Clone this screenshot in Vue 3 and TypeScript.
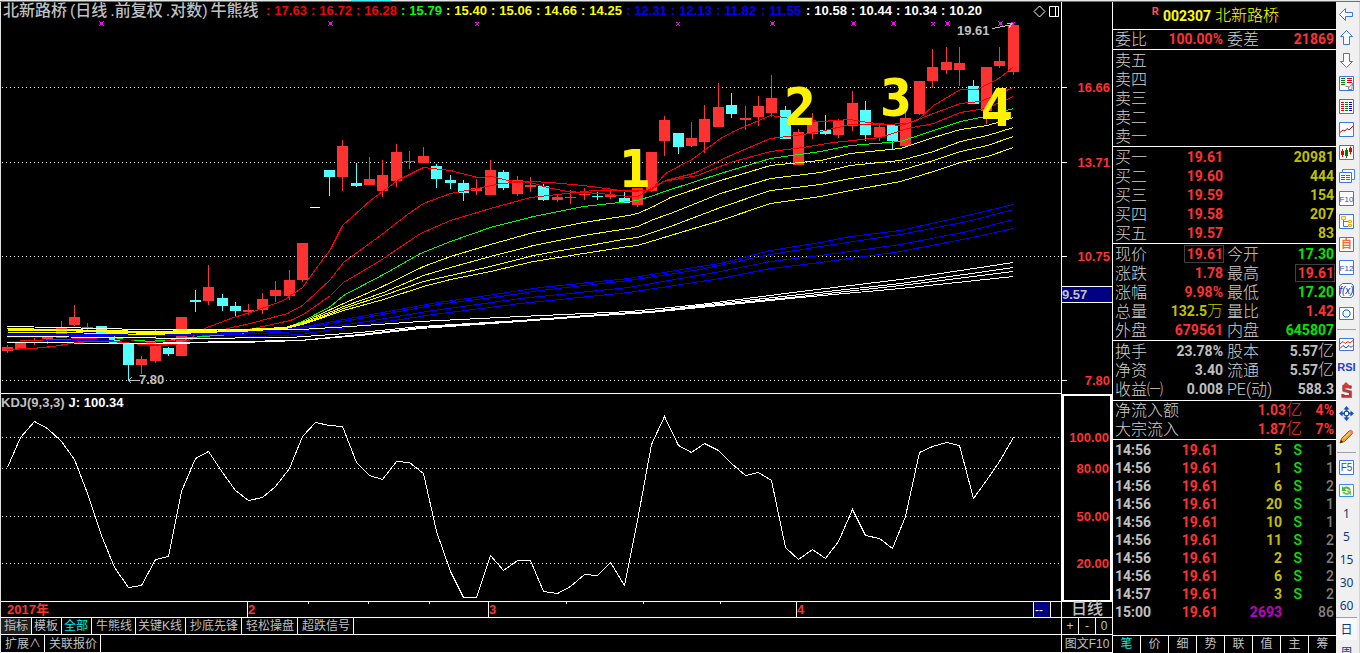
<script setup lang="ts">
type Tone = 'red' | 'green' | 'olive' | 'gray' | 'dim' | 'magenta'
type Point = [number, number]

const barX = (i: number): number => 7 + Math.round(i * 13.41)

const legend: { value: string; tone: string }[] = [
  ...['17.63', '16.72', '16.28'].map((value) => ({ value, tone: 'l-red' })),
  { value: '15.79', tone: 'l-green' },
  ...['15.40', '15.06', '14.66', '14.25'].map((value) => ({ value, tone: 'l-yellow' })),
  ...['12.31', '12.13', '11.82', '11.55'].map((value) => ({ value, tone: 'l-blue' })),
  ...['10.58', '10.44', '10.34', '10.20'].map((value) => ({ value, tone: 'l-white' })),
]

// bar index, high, low, body top, body bottom, falling
const candles: [number, number, number, number, number, number][] = [
  [0, 345, 353, 347, 351, 0], [1, 343, 349, 343, 349, 0], [2, 338, 345, 340, 341, 0],
  [3, 335, 344, 337, 339, 0], [4, 321, 338, 327, 338, 0], [5, 305, 326, 317, 325, 0],
  [6, 323, 332, 327, 328, 0], [7, 326, 335, 326, 335, 1], [8, 332, 344, 338, 343, 1],
  [9, 344, 380, 344, 365, 1], [10, 356, 374, 359, 365, 0], [11, 330, 363, 346, 361, 0],
  [12, 347, 356, 348, 354, 1], [13, 317, 356, 317, 356, 0], [14, 290, 312, 300, 302, 1],
  [15, 265, 305, 287, 301, 0], [16, 294, 311, 298, 306, 1], [17, 302, 316, 306, 311, 1],
  [18, 304, 315, 310, 312, 0], [19, 293, 314, 299, 310, 0], [20, 281, 302, 290, 296, 0],
  [21, 270, 300, 280, 296, 0], [22, 243, 282, 243, 280, 0], [24, 170, 196, 170, 177, 1],
  [25, 140, 191, 146, 177, 0], [26, 163, 187, 183, 186, 1], [27, 157, 185, 179, 185, 0],
  [28, 160, 197, 175, 191, 0], [29, 144, 187, 152, 181, 0], [30, 151, 169, 161, 162, 0],
  [31, 147, 163, 156, 163, 0], [32, 164, 188, 166, 179, 1], [33, 175, 189, 180, 183, 1],
  [34, 180, 201, 183, 193, 1], [35, 179, 195, 188, 191, 0], [36, 160, 195, 170, 195, 0],
  [37, 170, 190, 172, 188, 1], [38, 176, 196, 180, 194, 0], [39, 177, 192, 185, 187, 0],
  [40, 184, 201, 186, 200, 1], [41, 195, 202, 197, 200, 0], [42, 190, 204, 197, 198, 0],
  [43, 188, 200, 194, 195, 0], [44, 192, 200, 196, 197, 1], [45, 191, 199, 195, 197, 0],
  [46, 192, 203, 198, 203, 1], [47, 188, 207, 188, 205, 0], [48, 152, 192, 152, 191, 0],
  [49, 116, 156, 120, 141, 0], [50, 133, 154, 133, 147, 1], [51, 122, 147, 138, 146, 0],
  [52, 105, 153, 119, 142, 0], [53, 83, 127, 107, 127, 0], [54, 93, 118, 105, 114, 1],
  [55, 106, 130, 118, 120, 0], [56, 96, 126, 106, 117, 0], [57, 75, 117, 98, 113, 0],
  [58, 106, 139, 110, 139, 1], [59, 129, 165, 132, 165, 0], [60, 113, 139, 122, 134, 0],
  [61, 115, 135, 130, 134, 1], [62, 119, 138, 120, 135, 0], [63, 91, 131, 103, 126, 0],
  [64, 101, 141, 110, 135, 1], [65, 124, 141, 127, 137, 0], [66, 125, 150, 125, 141, 1],
  [67, 107, 148, 118, 146, 0], [68, 81, 115, 81, 114, 0], [69, 49, 88, 67, 81, 0],
  [70, 47, 74, 62, 70, 0], [71, 47, 86, 63, 70, 0], [72, 80, 104, 86, 104, 1],
  [73, 67, 124, 67, 111, 0], [74, 47, 68, 61, 66, 0], [75, 25, 75, 25, 72, 0],
]

const averages: { color: string; points: Point[] }[] = [
  { color: '#ff0000', points: [[7, 349], [33, 348], [60, 345], [80, 341], [110, 341], [135, 343], [165, 345], [185, 341], [204, 328], [233, 317], [253, 311], [283, 300], [302, 287], [323, 258], [330, 249], [342, 225], [370, 200], [397, 180], [423, 167], [450, 170], [477, 177], [492, 176], [507, 180], [530, 182], [547, 187], [567, 191], [600, 193], [628, 196], [637, 196], [653, 187], [665, 173], [693, 158], [720, 138], [733, 131], [770, 115], [790, 118], [820, 121], [850, 119], [867, 122], [900, 125], [917, 120], [933, 105], [960, 89], [977, 89], [1000, 77], [1013, 66]] },
  { color: '#ff0000', points: [[7, 349], [47, 347], [75, 342], [110, 340], [140, 344], [175, 344], [213, 332], [227, 328], [250, 323], [287, 313], [302, 305], [330, 279], [343, 262], [380, 235], [407, 214], [423, 203], [450, 193], [477, 188], [500, 183], [530, 181], [550, 182], [583, 185], [628, 191], [650, 190], [665, 180], [693, 173], [730, 155], [770, 138], [803, 134], [820, 131], [850, 124], [883, 124], [907, 123], [933, 113], [960, 103], [980, 101], [1013, 87]] },
  { color: '#ff0000', points: [[7, 341], [110, 337], [150, 342], [190, 338], [253, 328], [290, 320], [303, 314], [330, 295], [343, 282], [380, 260], [420, 233], [450, 220], [490, 208], [530, 197], [557, 194], [593, 190], [628, 190], [647, 190], [663, 181], [697, 175], [730, 162], [770, 151], [803, 147], [833, 142], [880, 137], [907, 128], [933, 123], [960, 112], [985, 108], [1013, 96]] },
  { color: '#00ff00', points: [[117, 338], [150, 341], [190, 337], [230, 334], [283, 328], [302, 321], [330, 306], [343, 295], [383, 274], [420, 253], [450, 241], [490, 227], [533, 216], [583, 206], [628, 201], [637, 200], [653, 195], [664, 191], [720, 173], [770, 158], [820, 151], [850, 145], [900, 141], [933, 130], [960, 121], [985, 116], [1013, 108]] },
  { color: '#0000ff', points: [[7, 334], [150, 335], [235, 332], [300, 327], [360, 316], [437, 302], [467, 298], [500, 293], [540, 287], [628, 278], [700, 266], [720, 263], [770, 250], [820, 242], [850, 236], [900, 230], [967, 215], [1013, 204]] },
  { color: '#0000ff', points: [[7, 335], [150, 334], [235, 333], [300, 328], [360, 318], [437, 304], [500, 296], [540, 290], [628, 280], [700, 269], [770, 254], [820, 246], [900, 234], [967, 221], [1013, 209]] },
  { color: '#0000ff', points: [[7, 337], [150, 335], [235, 334], [300, 331], [360, 322], [433, 310], [520, 298], [628, 287], [720, 271], [770, 261], [820, 255], [900, 244], [967, 231], [1013, 219]] },
  { color: '#0000ff', points: [[7, 341], [150, 339], [235, 337], [300, 334], [360, 325], [433, 314], [520, 303], [628, 292], [720, 278], [770, 268], [820, 262], [900, 251], [967, 238], [1013, 228]] },
  { color: '#ffff00', points: [[7, 328], [60, 329], [150, 331], [240, 329], [285, 327], [302, 322], [343, 303], [380, 287], [423, 266], [450, 256], [490, 244], [533, 232], [583, 222], [628, 215], [637, 213], [653, 206], [670, 197], [720, 180], [770, 165], [820, 160], [850, 153], [900, 148], [933, 137], [960, 129], [987, 125], [1013, 117]] },
  { color: '#ffff00', points: [[7, 329], [60, 329], [150, 332], [240, 330], [285, 327], [302, 323], [343, 306], [383, 292], [423, 275], [450, 267], [490, 256], [533, 245], [583, 235], [628, 228], [637, 226], [653, 219], [670, 213], [720, 193], [770, 178], [820, 172], [850, 165], [900, 160], [933, 151], [960, 141], [987, 135], [1013, 127]] },
  { color: '#ffff00', points: [[7, 330], [60, 330], [150, 333], [240, 331], [285, 328], [302, 324], [343, 308], [383, 295], [423, 281], [450, 275], [490, 266], [533, 255], [583, 246], [628, 238], [637, 237], [670, 226], [720, 207], [770, 190], [820, 184], [850, 178], [900, 170], [933, 160], [960, 151], [987, 145], [1013, 136]] },
  { color: '#ffff00', points: [[7, 332], [60, 332], [150, 334], [180, 333], [285, 328], [302, 324], [343, 310], [383, 299], [423, 286], [450, 279], [490, 271], [533, 261], [583, 253], [628, 246], [637, 245], [670, 235], [720, 220], [770, 203], [820, 196], [850, 190], [900, 181], [933, 171], [960, 162], [987, 156], [1013, 147]] },
  { color: '#ffffff', points: [[7, 326], [60, 327], [142, 329], [300, 329], [350, 326], [420, 321], [520, 316], [630, 311], [700, 304], [800, 291], [900, 279], [1013, 262]] },
  { color: '#ffffff', points: [[7, 336], [130, 337], [180, 338], [290, 337], [360, 332], [420, 326], [520, 320], [600, 314], [650, 311], [700, 305], [800, 294], [900, 283], [1013, 267]] },
  { color: '#ffffff', points: [[7, 342], [140, 343], [230, 341], [300, 340], [360, 334], [420, 327], [520, 320], [600, 315], [650, 312], [700, 306], [800, 296], [900, 285], [1013, 271]] },
  { color: '#ffffff', points: [[7, 342], [140, 343], [240, 342], [300, 340], [360, 335], [420, 328], [520, 321], [600, 315], [650, 312], [700, 307], [800, 297], [900, 288], [1013, 276]] },
]

const kdj: number[] = [
  467, 437, 421, 428, 441, 459, 493, 535, 567, 587, 585, 559, 556, 491, 458, 451, 472, 490, 500,
  497, 486, 468, 436, 422, 425, 426, 462, 475, 479, 461, 462, 473, 531, 571, 597, 597, 555, 570,
  560, 560, 591, 593, 586, 574, 575, 562, 585, 520, 444, 416, 445, 452, 443, 450, 463, 475, 472,
  480, 547, 559, 549, 558, 541, 509, 535, 538, 548, 516, 452, 446, 442, 445, 498, 480, 461, 437,
]

const join = (points: Point[]): string => points.map((p) => p.join(',')).join(' ')
const kdjLine = join(kdj.map((y, i): Point => [barX(i), y]))

const priceGrid = [
  { y: 87, label: '16.66' }, { y: 162, label: '13.71' },
  { y: 256, label: '10.75' }, { y: 380, label: '7.80' },
]
const kdjGrid = [
  { y: 437, label: '100.00' }, { y: 468, label: '80.00' },
  { y: 516, label: '50.00' }, { y: 563, label: '20.00' },
]
const marks = [
  { x: 101, big: true }, { x: 330, big: true }, { x: 477, big: false }, { x: 678, big: false },
  { x: 772, big: true }, { x: 853, big: true }, { x: 893, big: true }, { x: 933, big: false },
  { x: 947, big: true }, { x: 1000, big: true }, { x: 1013, big: false },
]
const waves = [
  { n: '1', x: 635, y: 187 }, { n: '2', x: 800, y: 125 },
  { n: '3', x: 896, y: 116 }, { n: '4', x: 997, y: 126 },
]
const months = [{ x: 248, label: '2' }, { x: 489, label: '3' }, { x: 797, label: '4' }]
const weekTicks = [308, 368, 429, 566, 643, 720]

const indicatorTabs = ['指标', '模板', '全部', '牛熊线', '关键K线', '抄底先锋', '轻松操盘', '超跌信号']
const extraTabs = ['扩展∧', '关联报价']

const asks = ['卖五', '卖四', '卖三', '卖二', '卖一']
const bids = [
  ['买一', '19.61', '20981'], ['买二', '19.60', '444'], ['买三', '19.59', '154'],
  ['买四', '19.58', '207'], ['买五', '19.57', '83'],
]

interface Pair { a: string; av: string; au?: string; at: Tone; b: string; bv: string; bu?: string; bt: Tone; boxA?: boolean; boxB?: boolean }
const quotes: Pair[] = [
  { a: '现价', av: '19.61', at: 'red', b: '今开', bv: '17.30', bt: 'green', boxA: true },
  { a: '涨跌', av: '1.78', at: 'red', b: '最高', bv: '19.61', bt: 'red', boxB: true },
  { a: '涨幅', av: '9.98%', at: 'red', b: '最低', bv: '17.20', bt: 'green' },
  { a: '总量', av: '132.5', au: '万', at: 'olive', b: '量比', bv: '1.42', bt: 'red' },
  { a: '外盘', av: '679561', at: 'red', b: '内盘', bv: '645807', bt: 'green' },
]
const finance: Pair[] = [
  { a: '换手', av: '23.78%', at: 'gray', b: '股本', bv: '5.57', bu: '亿', bt: 'gray' },
  { a: '净资', av: '3.40', at: 'gray', b: '流通', bv: '5.57', bu: '亿', bt: 'gray' },
  { a: '收益㈠', av: '0.008', at: 'gray', b: 'PE(动)', bv: '588.3', bt: 'gray' },
]
const flows = [['净流入额', '1.03', '4%'], ['大宗流入', '1.87', '7%']]
const trades = [
  ['14:56', '5', 'S', '1'], ['14:56', '1', 'S', '1'], ['14:56', '6', 'S', '2'],
  ['14:56', '20', 'S', '1'], ['14:56', '10', 'S', '1'], ['14:56', '11', 'S', '2'],
  ['14:56', '2', 'S', '2'], ['14:56', '6', 'S', '2'], ['14:57', '3', 'S', '2'],
  ['15:00', '2693', '', '86'],
]
const detailTabs = ['笔', '价', '细', '势', '联', '值', '主', '筹']

interface Shape { d: string; fill?: string; stroke?: string; w?: number }
interface Tool { name: string; shapes?: Shape[]; glyph?: string; size?: number; color?: string; bold?: boolean; italic?: boolean }
const blue = '#3c78dc'
const box: Shape = { d: 'M1.5 1.5H15.5V15.5H1.5Z', fill: '#fff', stroke: blue }
const rows = (x: number, w: number, ys: number[]): string => ys.map((y) => `M${x} ${y}h${w}`).join('')

const chartTools: Tool[] = [
  { name: '后退', shapes: [{ d: 'M1.5 8.5L7.5 2.5V6.5H14.5V10.5H7.5V14.5Z', fill: '#fff', stroke: blue }] },
  { name: '上移', shapes: [{ d: 'M8.5 1.5L14.5 7.5H11.5V15.5H5.5V7.5H2.5Z', fill: '#fff', stroke: blue }] },
  { name: '下移', shapes: [{ d: 'M8.5 15.5L14.5 9.5H11.5V1.5H5.5V9.5H2.5Z', fill: '#fff', stroke: blue }] },
  { name: '行情报价', shapes: [box, { d: rows(3, 4, [3.5, 5.5, 7.5, 9.5]), stroke: '#008000' }, { d: rows(9, 5, [3.5, 5.5, 7.5]), stroke: '#e00000' }, { d: 'M7.5 11.5h3v3h3.5v-3l1-3.5M10.5 13l4.5-5', stroke: '#888' }] },
  { name: '分类列表', shapes: [box, { d: rows(3, 3, [4.5, 6.5, 8.5, 10.5, 12.5]), stroke: '#e00000' }, { d: rows(7, 3, [4.5, 6.5, 8.5, 10.5, 12.5]), stroke: '#008000' }, { d: rows(11, 3, [4.5, 6.5, 8.5, 10.5, 12.5]), stroke: '#0000e0' }] },
  { name: '分时图', shapes: [box, { d: 'M2 11.5L5 9L7 10L9 7.5L11 9L15 5', stroke: '#e00000' }] },
  { name: 'K线图', shapes: [box, { d: 'M3 7h3v4H3ZM11 4h3v4h-3Z', fill: '#e00000' }, { d: 'M4.5 5v8M12.5 2.5v8', stroke: '#e00000' }, { d: 'M7 6h3v6H7Z', fill: '#008000' }, { d: 'M8.5 4v10', stroke: '#008000' }] },
  { name: '公告', shapes: [{ d: 'M4.5 2.5H16.5V12.5H4.5Z', fill: '#fff', stroke: '#3c8cff' }, { d: 'M1.5 5.5H13.5V15.5H1.5Z', fill: '#fff', stroke: blue }, { d: rows(3, 4, [8.5, 10.5, 12.5]) + rows(8, 4, [8.5, 10.5, 12.5]), stroke: '#606060' }] },
  { name: '基本资料', shapes: [box], glyph: 'F10', size: 8, color: '#1c50c8' },
  { name: '板块树', shapes: [box, { d: 'M5.5 6V13.5H10M5.5 8.5H10', stroke: blue }, { d: 'M3.5 3.5h4v3h-4ZM10.5 7.5h3v2h-3ZM10.5 11.5h3v2h-3Z', fill: '#fff0a0', stroke: '#f0b010' }] },
  { name: '自选股', shapes: [box], glyph: '自', size: 11, color: '#f07030', bold: true },
  { name: '委托', shapes: [box], glyph: 'F12', size: 8, color: '#1c50c8' },
  { name: '公式', shapes: [{ d: 'M4.5 1.5H13.5L15.5 4V13L13.5 15.5H3.5L1.5 13V4Z', fill: '#fff', stroke: '#20809c' }], glyph: 'f(x)', size: 10, color: '#1030b0', italic: true },
  { name: '画圈', shapes: [{ d: 'M1.5 2.5H15.5V14.5H1.5Z', fill: '#fff', stroke: blue }, { d: 'M7 5H10L12 7V10L10 12H7L5 10V7Z', stroke: '#1060b0' }] },
]
const drawTools: Tool[] = [
  { name: '多周期', shapes: [{ d: 'M1.5 2.5H15.5V14.5H1.5Z', fill: '#fff', stroke: blue }, { d: 'M2 8L5 5.5L7 7.5L10 5.5L12 7L15 4.5', stroke: '#e02020' }, { d: 'M2 12.5L5 9.5L8 12L11 9.5L13 11.5L15 9.5', stroke: '#2030e0' }] },
  { name: 'RSI指标', glyph: 'RSI', size: 11, color: '#2040d0', bold: true },
  { name: '资金', shapes: [{ d: 'M4 4L8 0L12 4Z', fill: '#d04040' }, { d: 'M12.5 6.5V5H6V8.5L12.5 10V14.5H5V12', stroke: '#808080', w: 3 }, { d: 'M12 6.5V4.5H5.5V8L12 10V14H4.5V12', stroke: '#d02c2c', w: 2 }] },
  { name: '移动', shapes: [{ d: 'M8.5 1L11.5 4.5H9.5V7.5H12.5V5.5L16 8.5L12.5 11.5V9.5H9.5V12.5H11.5L8.5 16L5.5 12.5H7.5V9.5H4.5V11.5L1 8.5L4.5 5.5V7.5H7.5V4.5H5.5Z', fill: '#1450c0' }, { d: 'M6.5 6.5H10.5V10.5H6.5Z', fill: '#fff', stroke: '#1450c0' }] },
  { name: '画线', shapes: [{ d: 'M2 15L3.5 10.5L11.5 2.5L14.5 5.5L6.5 13.5Z', fill: '#f0a030', stroke: '#a05818' }, { d: 'M11 3L13 1.5L15.5 4L14 6Z', fill: '#e08080' }, { d: 'M2 15L3 12L5 14Z', fill: '#302010' }, { d: 'M6 10.5L12 4.5', stroke: '#ffe090' }] },
]
const keyTools: Tool[] = [
  { name: '切换F5', shapes: [box], glyph: 'F5', size: 10, color: '#1c50c8' },
  { name: '刷新', shapes: [{ d: 'M1.5 2.5H15.5V14.5H1.5Z', fill: '#fff', stroke: '#3c8cff' }, { d: 'M4 9V4L5.5 5.5Q10 2.500 13 7.500L11 8Q9 5.500 7 7L8.500 9Z', fill: '#50b830' }, { d: 'M13 8.500V13.500L11.500 12Q7 14.500 4 10L6 9.500Q8 12 10 10.500L8.500 8.500Z', fill: '#70c850' }] },
]
const periods = ['1', '5', '15', '30', '60', '日', '周']
const toolGroups: Tool[][] = [chartTools, drawTools, keyTools]
</script>

<template>
  <div class="terminal">
    <div class="strip"><i></i></div>

    <div class="workspace">
      <main class="charts">
        <section class="pane price-pane">
          <header class="pane-head">
            <h1><span>北新路桥</span><span>(日线</span><span>.前复权</span><span>.对数)</span><span>牛熊线</span></h1>
            <ul class="legend">
              <li v-for="item in legend" :key="item.value" :class="item.tone"><b>:</b><b>{{ item.value }}</b></li>
            </ul>
            <svg class="pane-icons" viewBox="0 0 28 14" aria-hidden="true">
              <path d="M6.5 2L12 7.5L6.5 13L1 7.5Z" />
              <path d="M16.5 2.5H25.5V12.5H16.5ZM22.5 2.5V12.5" />
            </svg>
          </header>
          <svg class="plot" viewBox="1 20 1060 373" preserveAspectRatio="none">
            <g class="crisp" transform="translate(0.5 0.5)">
              <line v-for="g in priceGrid" :key="g.y" class="dots" x1="1.5" x2="1060" :y1="g.y" :y2="g.y" />
            </g>
            <g class="crisp">
              <g v-for="c in candles" :key="c[0]" :fill="c[5] ? '#54ffff' : '#ff3232'">
                <rect :x="barX(c[0])" :y="c[1]" width="1" :height="c[2] - c[1]" />
                <rect :x="barX(c[0]) - 5" :y="c[3]" width="11" :height="c[4] - c[3]" />
              </g>
              <rect x="310" y="207" width="10" height="1" fill="#fff" />
            </g>
            <g class="crisp" transform="translate(0.5 0.5)">
              <polyline v-for="(a, i) in averages" :key="i" class="line" :points="join(a.points)" :stroke="a.color" />
              <path class="arrow" d="M992 28L1012 24M1006 23H1012L1008 28" />
              <path class="arrow" d="M139 380H128M131 377L128 380L131 383" />
            </g>
            <g class="crisp" fill="#ff00ff">
              <g v-for="m in marks" :key="m.x">
                <rect v-if="m.big" :x="m.x - 1" y="22" width="3" height="3" />
                <rect v-else :x="m.x" y="23" width="1" height="1" />
                <path :d="m.big
                  ? `M${m.x - 2} 21h1v1h-1zM${m.x + 2} 21h1v1h-1zM${m.x - 2} 25h1v1h-1zM${m.x + 2} 25h1v1h-1z`
                  : `M${m.x - 2} 22h2v1h-2zM${m.x + 1} 22h1v1h-1zM${m.x - 2} 25h1v1h-1zM${m.x - 1} 24h2v1h-2zM${m.x + 1} 25h1v1h-1z`" />
              </g>
            </g>
            <text class="tag" x="957" y="35">19.61</text>
            <text class="tag" x="139" y="384">7.80</text>
            <text v-for="w in waves" :key="w.n" class="wave" :x="w.x" :y="w.y">{{ w.n }}</text>
          </svg>
        </section>

        <aside class="scale">
          <svg class="plot" viewBox="1062 2 50 392" preserveAspectRatio="none">
            <g v-for="g in priceGrid" :key="g.y">
              <rect class="crisp" x="1062" :y="g.y" width="5" height="1" fill="#fff" />
              <text class="scale-text" x="1110" :y="g.y + 5">{{ g.label }}</text>
            </g>
            <g class="crisp">
              <rect x="1062" y="286" width="50" height="17" fill="#fff" />
              <rect x="1062" y="287" width="50" height="15" fill="#000080" />
            </g>
            <text class="tag" x="1062" y="299">9.57</text>
          </svg>
        </aside>

        <section class="pane kdj-pane">
          <header class="kdj-head"><b>KDJ(9,3,3)</b><b class="l-white">J: 100.34</b></header>
          <svg class="plot" viewBox="1 411 1060 190" preserveAspectRatio="none">
            <g class="crisp" transform="translate(0.5 0.5)">
              <line v-for="g in kdjGrid" :key="g.y" class="dots" x1="1.5" x2="1060" :y1="g.y" :y2="g.y" />
              <polyline class="line" :points="kdjLine" stroke="#fff" />
            </g>
          </svg>
        </section>

        <aside class="scale framed">
          <svg class="plot" viewBox="1064 396 46 204" preserveAspectRatio="none">
            <text v-for="g in kdjGrid" :key="g.y" class="scale-text" x="1109" :y="g.y + 5">{{ g.label }}</text>
          </svg>
        </aside>

        <div class="pane time-axis">
          <svg class="plot" viewBox="1 602 1060 15" preserveAspectRatio="none">
            <g class="crisp" fill="#fff">
              <rect v-for="m in months" :key="m.x" :x="m.x - 1" y="602" width="1" height="15" />
              <rect v-for="t in weekTicks" :key="t" :x="t" y="602" width="1" height="2" />
              <rect x="1033" y="602" width="18" height="15" />
              <rect x="1034" y="602" width="16" height="15" fill="#000080" />
            </g>
            <text class="axis-text" x="7" y="614">2017年</text>
            <text v-for="m in months" :key="m.label" class="axis-text" :x="m.x" y="614">{{ m.label }}</text>
            <text class="dash" x="1035" y="614">--</text>
          </svg>
        </div>
        <div class="period">日线</div>

        <nav class="pane tabs" aria-label="指标">
          <button v-for="(t, i) in indicatorTabs" :key="t" type="button"
            :class="{ tight: i < 3 || i === 4, pressed: i === 0, active: i === 2 }">{{ t }}</button>
        </nav>
        <div class="zoomers">
          <button type="button">+</button><button type="button">-</button><button type="button">0</button>
        </div>

        <nav class="pane tabs" aria-label="扩展">
          <button v-for="t in extraTabs" :key="t" type="button">{{ t }}</button>
        </nav>
        <button class="f10" type="button">图文F10</button>
      </main>

      <aside class="quote">
        <header class="stock"><sup>R</sup><b>002307</b><span>北新路桥</span></header>

        <div class="block one">
          <div class="pair"><span>委比</span><b class="red">100.00%</b><span>委差</span><b class="red">21869</b></div>
        </div>
        <div class="block">
          <div v-for="a in asks" :key="a" class="pair"><span>{{ a }}</span></div>
        </div>
        <div class="block">
          <div v-for="b in bids" :key="b[0]" class="pair">
            <span>{{ b[0] }}</span><b class="red">{{ b[1] }}</b><span></span><b class="olive">{{ b[2] }}</b>
          </div>
        </div>
        <div class="block">
          <div v-for="q in quotes" :key="q.a" class="pair">
            <span>{{ q.a }}</span><b :class="[q.at, { boxed: q.boxA }]">{{ q.av }}<em v-if="q.au">{{ q.au }}</em></b>
            <span>{{ q.b }}</span><b :class="[q.bt, { boxed: q.boxB }]">{{ q.bv }}</b>
          </div>
        </div>
        <div class="block loose">
          <div v-for="q in finance" :key="q.a" class="pair">
            <span>{{ q.a }}</span><b :class="q.at">{{ q.av }}</b>
            <span>{{ q.b }}</span><b :class="q.bt">{{ q.bv }}<em v-if="q.bu">{{ q.bu }}</em></b>
          </div>
        </div>
        <div class="block flush">
          <div v-for="f in flows" :key="f[0]" class="flow">
            <span>{{ f[0] }}</span><b class="red">{{ f[1] }}<em>亿</em></b><b class="red">{{ f[2] }}</b>
          </div>
        </div>

        <table class="trades">
          <tbody>
            <tr v-for="(t, i) in trades" :key="i">
              <td class="time">{{ t[0] }}</td>
              <td class="red price">19.61</td>
              <td class="vol" :class="t[2] ? 'olive' : 'magenta'">{{ t[1] }}</td>
              <td class="green side">{{ t[2] }}</td>
              <td class="dim count">{{ t[3] }}</td>
            </tr>
          </tbody>
        </table>

        <nav class="detail-tabs" aria-label="明细">
          <button v-for="(t, i) in detailTabs" :key="t" type="button" :class="{ active: i === 0 }">{{ t }}</button>
        </nav>
      </aside>

      <nav class="toolbar" aria-label="工具">
        <template v-for="(group, gi) in toolGroups" :key="gi">
          <hr v-if="gi > 0" />
          <button v-for="t in group" :key="t.name" type="button" :aria-label="t.name">
            <svg viewBox="0 0 17 17">
              <path v-for="(s, i) in t.shapes" :key="i" :d="s.d" :fill="s.fill ?? 'none'" :stroke="s.stroke ?? 'none'" :stroke-width="s.w ?? 1" />
              <text v-if="t.glyph" x="8.5" y="12" text-anchor="middle" :font-size="t.size" :fill="t.color"
                :font-weight="t.bold ? 700 : 400" :font-style="t.italic ? 'italic' : 'normal'">{{ t.glyph }}</text>
            </svg>
          </button>
        </template>
        <button v-for="p in periods" :key="p" type="button" class="num" :class="{ chosen: p === '日' }">{{ p }}</button>
      </nav>
    </div>
  </div>
</template>

<style>
html,
body {
  background: #000;
  overflow: hidden;
}
</style>

<style scoped>
* {
  box-sizing: border-box;
}
.terminal {
  display: flex;
  flex-direction: column;
  height: 100vh;
  background: #000;
  color: #c0c0c0;
  font-family: "Liberation Sans", "Noto Sans CJK SC", sans-serif;
  font-size: 13px;
}
button {
  margin: 0;
  padding: 0;
  border: 0;
  background: none;
  color: inherit;
  font-family: inherit;
}
b {
  font-weight: 700;
}
.strip {
  flex: none;
  display: flex;
  height: 2px;
  background: #e4e8e4;
  border-bottom: 1px solid #707070;
}
.strip i {
  width: 40px;
  margin-left: 351px;
  background: #40f0f0;
}
.workspace {
  flex: 1;
  min-height: 0;
  display: grid;
  grid-template-columns: minmax(0, 1fr) 224px 24px;
}
.charts {
  min-height: 0;
  display: grid;
  grid-template-columns: minmax(0, 1fr) 50px;
  grid-template-rows: minmax(0, 392fr) minmax(0, 208fr) 16px 17px 18px;
  border-left: 1px solid #e0e0e0;
}
.pane {
  min-width: 0;
  min-height: 0;
  border-right: 1px solid #fff;
  border-bottom: 1px solid #fff;
  display: flex;
  overflow: hidden;
}
.price-pane,
.kdj-pane {
  flex-direction: column;
}
.plot {
  display: block;
  width: 100%;
  height: 100%;
  flex: 1;
  min-height: 0;
}
.crisp {
  shape-rendering: crispEdges;
}
.pane-head {
  flex: none;
  height: 18px;
  display: flex;
  align-items: center;
  padding-left: 2px;
  overflow: hidden;
}
h1 {
  flex: none;
  width: 263px;
  margin: 0;
  display: flex;
  gap: 3px;
  font-size: 16px;
  line-height: 18px;
  font-weight: 500;
  white-space: nowrap;
}
.legend {
  display: flex;
  margin: 0;
  padding: 0;
  list-style: none;
  line-height: 18px;
}
.legend li {
  flex: none;
  width: 45px;
  display: flex;
  gap: 4px;
}
.pane-icons {
  flex: none;
  width: 28px;
  height: 14px;
  margin-left: auto;
  fill: none;
  stroke: #fff;
}
.l-red { color: #ff0000; }
.l-green { color: #00ff00; }
.l-yellow { color: #ffff00; }
.l-blue { color: #0000ff; }
.l-white { color: #fff; }
.dots {
  stroke: #fff;
  stroke-dasharray: 1 3;
}
.line {
  fill: none;
}
.arrow {
  fill: none;
  stroke: #c0c0c0;
}
.tag {
  fill: #c0c0c0;
  font-size: 13px;
  font-weight: 700;
}
.wave {
  fill: #fff200;
  font-family: "DejaVu Sans Condensed", "DejaVu Sans", sans-serif;
  font-size: 51px;
  font-weight: 700;
  text-anchor: middle;
}
.scale {
  min-width: 0;
  min-height: 0;
  overflow: hidden;
}
.framed {
  border: 2px solid #fff;
}
.scale-text {
  fill: #ff3232;
  font-size: 13px;
  font-weight: 700;
  text-anchor: end;
}
.kdj-head {
  flex: none;
  height: 17px;
  display: flex;
  gap: 4px;
  line-height: 17px;
}
.axis-text {
  fill: #ff3232;
  font-size: 13px;
  font-weight: 700;
}
.dash {
  fill: #fff;
  font-size: 12px;
}
.period {
  border-bottom: 1px solid #fff;
  font-size: 16px;
  font-weight: 500;
  line-height: 14px;
  text-align: center;
}
.tabs button {
  flex: none;
  padding: 0 3px 0 4px;
  border-right: 1px solid #fff;
  font-size: 12px;
  line-height: 16px;
  white-space: nowrap;
}
.tabs .tight {
  padding: 0 3px 0 2px;
}
.tabs .pressed {
  padding-left: 3px;
  background: #202020;
}
.tabs .active,
.detail-tabs .active {
  color: #00f0f0;
}
.zoomers {
  display: flex;
  border-bottom: 1px solid #fff;
}
.zoomers button {
  flex: 1;
  border-right: 1px solid #fff;
  font-size: 12px;
}
.zoomers button:last-child {
  border-right: 0;
}
.f10 {
  border-bottom: 1px solid #fff;
  font-size: 12px;
  line-height: 16px;
  white-space: nowrap;
}

.quote {
  min-height: 0;
  display: flex;
  flex-direction: column;
  border-left: 1px solid #fff;
  font-family: Roboto, "Noto Sans CJK SC", sans-serif;
  font-size: 14px;
  overflow: hidden;
}
.quote span,
.quote em {
  font-size: 16px;
  font-style: normal;
  font-weight: 300;
  line-height: 1;
  white-space: nowrap;
}
.quote .pair span,
.quote .flow span {
  color: #d0d0d0;
  line-height: 19px;
}
.stock {
  flex: none;
  height: 28px;
  display: flex;
  justify-content: center;
  align-items: center;
  gap: 4px;
  padding-right: 18px;
  border-bottom: 1px solid #fff;
  color: #ffff00;
}
.stock sup {
  align-self: flex-start;
  color: #ff5050;
  font-size: 11px;
  font-weight: 700;
  line-height: 19px;
}
.block {
  flex: none;
  padding-top: 1px;
  border-bottom: 1px solid #fff;
}
.loose {
  padding-bottom: 1px;
}
.one,
.flush {
  padding-top: 0;
}
.pair {
  display: grid;
  grid-template-columns: 48px 61px 46px 1fr;
  height: 19px;
  padding: 0 1px 0 2px;
  line-height: 19px;
}
.pair b {
  justify-self: end;
  padding-right: 1px;
  white-space: nowrap;
}
.pair b:nth-of-type(1) {
  margin-left: -8px;
}
.pair span:nth-of-type(2) {
  padding-left: 3px;
}
.pair .boxed {
  height: 18px;
  padding: 0 0 0 2px;
  border: 1px solid #404040;
  line-height: 17px;
}
.flow {
  display: grid;
  grid-template-columns: 1fr 70px 32px;
  height: 19px;
  padding: 0 2px;
  line-height: 19px;
}
.flow b {
  text-align: right;
}
.red { color: #ff3232; }
.green { color: #00e600; }
.olive { color: #c0c000; }
.gray { color: #c0c0c0; }
.magenta { color: #c000c0; }
.dim { color: #808080; }
.trades {
  flex: none;
  width: 100%;
  margin-top: 1px;
  border-collapse: collapse;
  table-layout: fixed;
  font-weight: 700;
}
.trades td {
  height: 18px;
  padding: 0;
  line-height: 18px;
  text-align: right;
}
.trades .time {
  width: 52px;
  padding-left: 2px;
  text-align: left;
}
.trades .price {
  width: 53px;
}
.trades .vol {
  width: 64px;
}
.trades .side {
  width: 20px;
  font-weight: 500;
}
.trades .count {
  padding-right: 2px;
  font-weight: 500;
}
.detail-tabs {
  flex: none;
  display: flex;
  height: 18px;
  margin-top: auto;
  border-top: 1px solid #fff;
}
.detail-tabs button {
  flex: 1;
  border-right: 1px solid #fff;
  font-size: 12px;
  line-height: 17px;
}
.detail-tabs button:last-child {
  border-right: 0;
}

.toolbar {
  min-height: 0;
  display: flex;
  flex-direction: column;
  align-items: stretch;
  padding: 1px 2px 0 0;
  border-right: 1px solid #d4d4d4;
  background: #f0f0f0;
  overflow: hidden;
}
.toolbar button {
  flex: none;
  height: 23px;
  display: flex;
  justify-content: center;
  align-items: center;
}
.toolbar svg {
  width: 17px;
  height: 17px;
  overflow: visible;
}
.toolbar hr {
  flex: none;
  width: 19px;
  height: 1px;
  margin: 4px 1px 3px;
  border: 0;
  background: #a0a0a0;
}
.toolbar .num {
  color: #103880;
  font-family: "Noto Sans", "Noto Sans CJK SC", sans-serif;
  font-size: 12px;
}
.toolbar .chosen {
  border-top: 1px solid #a0a0a0;
  background: #f8f8f8;
}
</style>
